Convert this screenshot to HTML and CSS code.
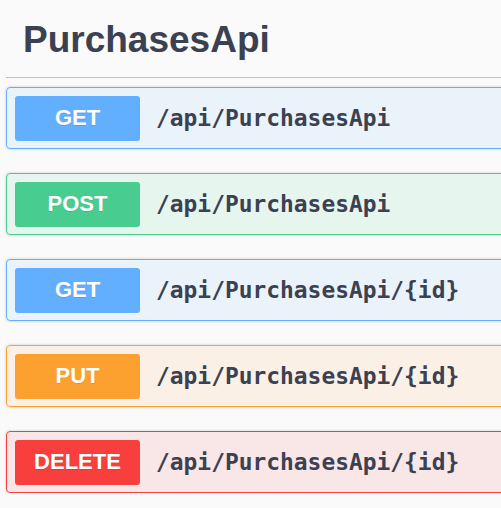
FILE: index.html
```html
<!DOCTYPE html>
<html>
<head>
<meta charset="utf-8">
<link rel="stylesheet" href="styles.css">
</head>
<body>
<div class="wrap">
  <h3 class="tag">PurchasesApi</h3>
  <div class="ops">
    <div class="op op-get"><span class="method">GET</span><span class="path">/api/PurchasesApi</span></div>
    <div class="op op-post"><span class="method">POST</span><span class="path">/api/PurchasesApi</span></div>
    <div class="op op-get"><span class="method">GET</span><span class="path">/api/PurchasesApi/{id}</span></div>
    <div class="op op-put"><span class="method">PUT</span><span class="path">/api/PurchasesApi/{id}</span></div>
    <div class="op op-delete"><span class="method">DELETE</span><span class="path">/api/PurchasesApi/{id}</span></div>
  </div>
</div>
</body>
</html>
```

FILE: styles.css
```css
html, body {
  margin: 0;
  padding: 0;
  background: #fafafa;
  overflow: hidden;
}
.wrap {
  width: 620px;
  padding-left: 6px;
  font-family: "Liberation Sans", Arial, sans-serif;
  color: #3b4151;
}
.tag {
  margin: 0;
  padding: 20px 0 17px 17px;
  font-size: 37px;
  font-weight: bold;
  line-height: 40px;
  border-bottom: 1px solid rgba(59, 65, 81, 0.3);
}
.ops {
  display: flex;
  flex-direction: column;
  gap: 24px;
  padding-top: 9px;
}
.op {
  display: flex;
  align-items: center;
  height: 60px;
  padding: 0 8px;
  border: 1px solid;
  border-radius: 4px;
  box-shadow: 0 0 3px rgba(0, 0, 0, 0.19);
}
.method {
  width: 125px;
  height: 45px;
  display: flex;
  align-items: center;
  justify-content: center;
  border-radius: 3px;
  color: #fff;
  font-size: 22px;
  font-weight: bold;
  text-shadow: 0 1px 0 rgba(0, 0, 0, 0.1);
}
.path {
  margin-left: 16px;
  font-family: "DejaVu Sans Mono", monospace;
  font-weight: bold;
  font-size: 22.9px;
  color: #3b4151;
}
.op-get { background: rgba(97, 175, 254, 0.1); border-color: #61affe; }
.op-get .method { background: #61affe; }
.op-post { background: rgba(73, 204, 144, 0.1); border-color: #49cc90; }
.op-post .method { background: #49cc90; }
.op-put { background: rgba(252, 161, 48, 0.1); border-color: #fca130; }
.op-put .method { background: #fca130; }
.op-delete { background: rgba(249, 62, 62, 0.1); border-color: #f93e3e; }
.op-delete .method { background: #f93e3e; }
```
